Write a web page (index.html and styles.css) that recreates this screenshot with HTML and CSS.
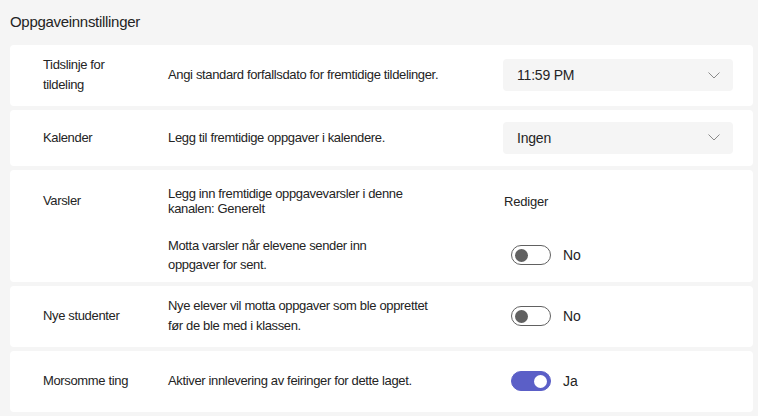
FILE: index.html
```html
<!DOCTYPE html>
<html lang="nb">
<head>
    <meta charset="UTF-8">
    <meta name="viewport" content="width=device-width, initial-scale=1.0">
    <title>Oppgaveinnstillinger</title>
    <link rel="stylesheet" href="styles.css">
</head>
<body>
    <div class="page">
        <h1 class="page-title">Oppgaveinnstillinger</h1>

        <div class="settings">
            <div class="setting">
                <div class="setting-label">Tidslinje for tildeling</div>
                <div class="setting-desc">Angi standard forfallsdato for fremtidige tildelinger.</div>
                <div class="setting-control">
                    <div class="dropdown">
                        <span>11:59 PM</span>
                        <svg class="chevron" width="12" height="7" viewBox="0 0 12 7"><polyline points="0.5,0.5 6,6 11.5,0.5" fill="none" stroke="#8a8a8a" stroke-width="1"/></svg>
                    </div>
                </div>
            </div>

            <div class="setting setting-compact">
                <div class="setting-label">Kalender</div>
                <div class="setting-desc">Legg til fremtidige oppgaver i kalendere.</div>
                <div class="setting-control">
                    <div class="dropdown">
                        <span>Ingen</span>
                        <svg class="chevron" width="12" height="7" viewBox="0 0 12 7"><polyline points="0.5,0.5 6,6 11.5,0.5" fill="none" stroke="#8a8a8a" stroke-width="1"/></svg>
                    </div>
                </div>
            </div>

            <div class="setting setting-multi">
                <div class="setting-label">Varsler</div>
                <div class="setting-desc tight">Legg inn fremtidige oppgavevarsler i denne kanalen: Generelt</div>
                <div class="setting-control">
                    <span class="link">Rediger</span>
                </div>
                <div class="setting-desc row-two">Motta varsler når elevene sender inn oppgaver for sent.</div>
                <div class="setting-control row-two">
                    <div class="toggle"><span class="knob"></span></div>
                    <span class="toggle-text">No</span>
                </div>
            </div>

            <div class="setting">
                <div class="setting-label">Nye studenter</div>
                <div class="setting-desc narrow">Nye elever vil motta oppgaver som ble opprettet før de ble med i klassen.</div>
                <div class="setting-control">
                    <div class="toggle"><span class="knob"></span></div>
                    <span class="toggle-text">No</span>
                </div>
            </div>

            <div class="setting">
                <div class="setting-label">Morsomme ting</div>
                <div class="setting-desc">Aktiver innlevering av feiringer for dette laget.</div>
                <div class="setting-control">
                    <div class="toggle on"><span class="knob"></span></div>
                    <span class="toggle-text">Ja</span>
                </div>
            </div>
        </div>
    </div>
</body>
</html>
```

FILE: styles.css
```css
body {
    font-family: "Liberation Sans", Arial, sans-serif;
    background-color: #f5f5f5;
    color: #242424;
    margin: 0;
    padding: 0;
}
.page {
    padding: 0 5px 0 10px;
}
.page-title {
    font-size: 15px;
    font-weight: normal;
    line-height: 20px;
    letter-spacing: -0.3px;
    margin: 0;
    padding: 12px 0 13px 0;
}
.settings {
    display: flex;
    flex-direction: column;
    gap: 4px;
}
.setting {
    display: grid;
    grid-template-columns: 125px 335px 230px;
    align-items: center;
    background: white;
    border-radius: 4px;
    padding: 10px 20px 11px 33px;
    min-height: 61px;
    box-sizing: border-box;
    font-size: 13px;
    letter-spacing: -0.35px;
}
.setting-compact {
    min-height: 56px;
}
.setting-multi {
    grid-template-rows: 30px 38px;
    row-gap: 20px;
    padding: 16px 20px 8px 33px;
}
.setting-label {
    max-width: 95px;
    line-height: 20px;
}
.setting-desc {
    max-width: 290px;
    line-height: 20px;
}
.setting-desc.narrow {
    max-width: 270px;
}
.setting-desc.tight {
    max-width: 240px;
    line-height: 15px;
}
.setting-desc.row-two {
    grid-column: 2;
    grid-row: 2;
    max-width: 220px;
    line-height: 19px;
}
.setting-control {
    display: flex;
    align-items: center;
    letter-spacing: 0;
}
.setting-control.row-two {
    grid-column: 3;
    grid-row: 2;
}
.dropdown {
    flex: 1;
    height: 32px;
    display: flex;
    align-items: center;
    justify-content: space-between;
    background: #f5f5f5;
    border-radius: 4px;
    padding: 0 13px 0 14px;
    font-size: 14px;
    letter-spacing: -0.2px;
}
.link {
    font-size: 13px;
    padding-left: 1px;
    letter-spacing: -0.2px;
}
.toggle {
    width: 40px;
    height: 20px;
    box-sizing: border-box;
    border: 1px solid #616161;
    border-radius: 10px;
    margin-left: 8px;
    display: flex;
    align-items: center;
    padding: 0 3px;
}
.knob {
    width: 13px;
    height: 13px;
    border-radius: 50%;
    background: #616161;
}
.toggle.on {
    background: #5b5fc7;
    border-color: #5b5fc7;
    justify-content: flex-end;
}
.toggle.on .knob {
    background: white;
}
.toggle-text {
    font-size: 14px;
    margin-left: 12px;
}
```
